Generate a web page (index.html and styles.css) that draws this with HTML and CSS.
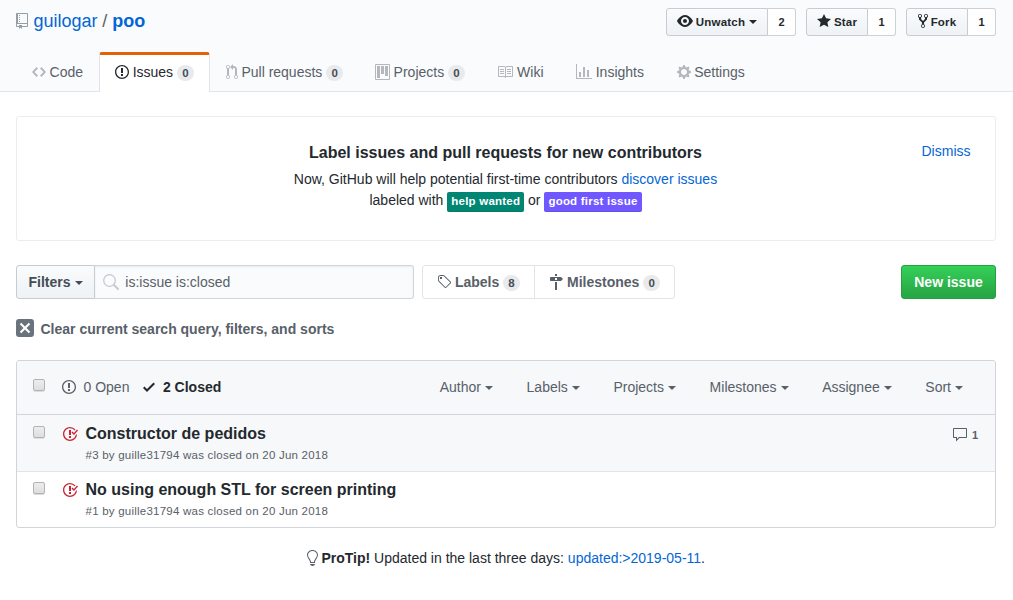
FILE: index.html
```html
<!DOCTYPE html>
<html lang="en">
<head>
<meta charset="utf-8">
<title>Issues · guilogar/poo</title>
<link rel="stylesheet" href="styles.css">
</head>
<body>
<header class="repohead">
  <div class="repohead-top">
    <h1 class="repo-title"><svg class="octicon repo-icon" width="12" height="16" viewBox="0 0 12 16"><path d="M4 9H3V8h1v1zm0-3H3v1h1V6zm0-2H3v1h1V4zm0-2H3v1h1V2zm8-1v12c0 .55-.45 1-1 1H6v2l-1.5-1.5L3 16v-2H1c-.55 0-1-.45-1-1V1c0-.55.45-1 1-1h10c.55 0 1 .45 1 1zm-1 10H1v2h2v-1h3v1h5v-2zm0-10H2v9h9V1z"/></svg><a href="#">guilogar</a><span class="divider">/</span><a href="#" class="strong">poo</a></h1>
    <ul class="actions">
      <li class="action watch"><button class="btn-sm"><svg class="octicon" width="16" height="16" viewBox="0 0 16 16"><path d="M8.06 2C3 2 0 8 0 8s3 6 8.06 6C13 14 16 8 16 8s-3-6-7.94-6zM8 12c-2.2 0-4-1.78-4-4 0-2.2 1.8-4 4-4 2.22 0 4 1.8 4 4 0 2.22-1.78 4-4 4zm2-4c0 1.11-.89 2-2 2-1.11 0-2-.89-2-2 0-1.11.89-2 2-2 1.11 0 2 .89 2 2z"/></svg> Unwatch<i class="caret"></i></button><a href="#" class="count">2</a></li>
      <li class="action"><button class="btn-sm"><svg class="octicon" width="14" height="16" viewBox="0 0 14 16"><path d="M14 6l-4.9-.64L7 1 4.9 5.36 0 6l3.6 3.26L2.67 14 7 11.67 11.33 14l-.93-4.74L14 6z"/></svg> Star</button><a href="#" class="count">1</a></li>
      <li class="action"><button class="btn-sm"><svg class="octicon" width="10" height="16" viewBox="0 0 10 16"><path d="M8 1a1.993 1.993 0 0 0-1 3.72V6L5 8 3 6V4.72A1.993 1.993 0 0 0 2 1a1.993 1.993 0 0 0-1 3.72V6.5l3 3v1.78A1.993 1.993 0 0 0 5 15a1.993 1.993 0 0 0 1-3.72V9.5l3-3V4.72A1.993 1.993 0 0 0 8 1zM2 4.2C1.34 4.2.8 3.65.8 3c0-.65.55-1.2 1.2-1.2.65 0 1.2.55 1.2 1.2 0 .65-.55 1.2-1.2 1.2zm3 10c-.66 0-1.2-.55-1.2-1.2 0-.65.55-1.2 1.2-1.2.65 0 1.2.55 1.2 1.2 0 .65-.55 1.2-1.2 1.2zm3-10c-.66 0-1.2-.55-1.2-1.2 0-.65.55-1.2 1.2-1.2.65 0 1.2.55 1.2 1.2 0 .65-.55 1.2-1.2 1.2z"/></svg> Fork</button><a href="#" class="count">1</a></li>
    </ul>
  </div>
  <nav class="reponav">
    <a href="#" class="tab"><svg class="octicon" width="14" height="16" viewBox="0 0 14 16"><path d="M9.5 3L8 4.5 11.5 8 8 11.5 9.5 13 14 8 9.5 3zm-5 0L0 8l4.5 5L6 11.5 2.5 8 6 4.5 4.5 3z"/></svg> Code</a>
    <a href="#" class="tab selected"><svg class="octicon" width="14" height="16" viewBox="0 0 14 16"><path d="M7 2.3c3.14 0 5.7 2.56 5.7 5.7s-2.56 5.7-5.7 5.7A5.71 5.71 0 0 1 1.3 8c0-3.14 2.56-5.7 5.7-5.7zM7 1C3.14 1 0 4.14 0 8s3.14 7 7 7 7-3.14 7-7-3.14-7-7-7zm1 3H6v5h2V4zm0 6H6v2h2v-2z"/></svg> Issues <span class="counter">0</span></a>
    <a href="#" class="tab"><svg class="octicon" width="12" height="16" viewBox="0 0 12 16"><path d="M11 11.28V5c-.03-.78-.34-1.47-.94-2.06C9.46 2.35 8.78 2.03 8 2H7V0L4 3l3 3V4h1c.27.02.48.11.69.31.21.2.3.42.31.69v6.28A1.993 1.993 0 0 0 10 15a1.993 1.993 0 0 0 1-3.72zm-1 2.92c-.66 0-1.2-.55-1.2-1.2 0-.65.55-1.2 1.2-1.2.65 0 1.2.55 1.2 1.2 0 .65-.55 1.2-1.2 1.2zM4 3c0-1.11-.89-2-2-2a1.993 1.993 0 0 0-1 3.72v6.56A1.993 1.993 0 0 0 2 15a1.993 1.993 0 0 0 1-3.72V4.72c.59-.34 1-.98 1-1.72zm-.8 10c0 .66-.55 1.2-1.2 1.2-.65 0-1.2-.55-1.2-1.2 0-.65.55-1.2 1.2-1.2.65 0 1.2.55 1.2 1.2zM2 4.2C1.34 4.2.8 3.65.8 3c0-.65.55-1.2 1.2-1.2.65 0 1.2.55 1.2 1.2 0 .65-.55 1.2-1.2 1.2z"/></svg> Pull requests <span class="counter">0</span></a>
    <a href="#" class="tab"><svg class="octicon" width="15" height="16" viewBox="0 0 15 16"><path fill-rule="evenodd" d="M10 12h3V2h-3v10zm-4-2h3V2H6v8zm-4 4h3V2H2v12zm-1 1h13V1H1v14zM14 0H1a1 1 0 0 0-1 1v14a1 1 0 0 0 1 1h13a1 1 0 0 0 1-1V1a1 1 0 0 0-1-1z"/></svg> Projects <span class="counter">0</span></a>
    <a href="#" class="tab plain"><svg class="octicon" width="16" height="16" viewBox="0 0 16 16"><path d="M3 5h4v1H3V5zm0 3h4V7H3v1zm0 2h4V9H3v1zm11-5h-4v1h4V5zm0 2h-4v1h4V7zm0 2h-4v1h4V9zm2-6v9c0 .55-.45 1-1 1H9.5l-1 1-1-1H2c-.55 0-1-.45-1-1V3c0-.55.45-1 1-1h5.5l1 1 1-1H15c.55 0 1 .45 1 1zm-8 .5L7.5 3H2v9h6V3.5zm7-.5H9.5l-.5.5V12h6V3z"/></svg> Wiki</a>
    <a href="#" class="tab plain"><svg class="octicon" width="16" height="16" viewBox="0 0 16 16"><path d="M16 14v1H0V0h1v14h15zM5 13H3V8h2v5zm4 0H7V3h2v10zm4 0h-2V6h2v7z"/></svg> Insights</a>
    <a href="#" class="tab plain"><svg class="octicon" width="14" height="16" viewBox="0 0 14 16"><path d="M14 8.77v-1.6l-1.94-.64-.45-1.09.88-1.84-1.13-1.13-1.81.91-1.09-.45-.69-1.92h-1.6l-.63 1.94-1.11.45-1.84-.88-1.13 1.13.91 1.81-.45 1.09L0 7.23v1.59l1.94.64.45 1.09-.88 1.84 1.13 1.13 1.81-.91 1.09.45.69 1.92h1.59l.63-1.94 1.11-.45 1.84.88 1.13-1.13-.92-1.81.47-1.09L14 8.75v.02zM7 11c-1.66 0-3-1.34-3-3s1.34-3 3-3 3 1.34 3 3-1.34 3-3 3z"/></svg> Settings</a>
  </nav>
</header>

<main class="content">
  <section class="banner">
    <a href="#" class="dismiss">Dismiss</a>
    <h2 class="banner-title">Label issues and pull requests for new contributors</h2>
    <p class="banner-text">Now, GitHub will help potential first-time contributors <a href="#">discover issues</a><br>labeled with <span class="label green">help wanted</span> or <span class="label purple">good first issue</span></p>
  </section>

  <div class="subnav">
    <button class="btn filters">Filters<i class="caret"></i></button>
    <div class="search"><svg class="search-icon" width="17" height="17" viewBox="0 0 17 17"><circle cx="6.5" cy="6.5" r="5.8"/><path d="M11 11l4 4"/></svg>is:issue is:closed</div>
    <div class="links">
      <a href="#" class="link"><svg class="octicon" width="14" height="16" viewBox="0 0 14 16"><path d="M7.73 1.73C7.26 1.26 6.62 1 5.96 1H3.5C2.13 1 1 2.13 1 3.5v2.47c0 .66.27 1.3.73 1.77l6.06 6.06c.39.39 1.02.39 1.41 0l4.59-4.59a.996.996 0 0 0 0-1.41L7.73 1.73zM2.38 7.09c-.31-.3-.47-.7-.47-1.13V3.5c0-.88.72-1.59 1.59-1.59h2.47c.42 0 .83.16 1.13.47l6.14 6.13-4.73 4.73-6.13-6.15zM3.01 3h2v2H3V3h.01z"/></svg> Labels <span class="counter">8</span></a>
      <a href="#" class="link"><svg class="octicon" width="14" height="16" viewBox="0 0 14 16"><path d="M8 2H6V0h2v2zm4 5H2c-.55 0-1-.45-1-1V4c0-.55.45-1 1-1h10l2 2-2 2zM8 4H6v2h2V4zM6 16h2V8H6v8z"/></svg> Milestones <span class="counter">0</span></a>
    </div>
    <button class="btn primary">New issue</button>
  </div>

  <a href="#" class="clear"><span class="clear-icon"><svg class="octicon" width="12" height="16" viewBox="0 0 12 16"><path d="M7.48 8l3.75 3.75-1.48 1.48L6 9.48l-3.75 3.75-1.48-1.48L4.52 8 .77 4.25l1.48-1.48L6 6.52l3.75-3.75 1.48 1.48L7.48 8z"/></svg></span>Clear current search query, filters, and sorts</a>

  <section class="box">
    <div class="box-header">
      <span class="checkbox"></span>
      <a href="#" class="state"><svg class="octicon" width="14" height="16" viewBox="0 0 14 16"><path d="M7 2.3c3.14 0 5.7 2.56 5.7 5.7s-2.56 5.7-5.7 5.7A5.71 5.71 0 0 1 1.3 8c0-3.14 2.56-5.7 5.7-5.7zM7 1C3.14 1 0 4.14 0 8s3.14 7 7 7 7-3.14 7-7-3.14-7-7-7zm1 3H6v5h2V4zm0 6H6v2h2v-2z"/></svg>0 Open</a>
      <a href="#" class="state current"><svg class="octicon" width="12" height="16" viewBox="0 0 12 16"><path d="M12 5l-8 8-4-4 1.5-1.5L4 10l6.5-6.5L12 5z"/></svg>2 Closed</a>
      <div class="menus">
        <span class="menu">Author<i class="caret"></i></span>
        <span class="menu">Labels<i class="caret"></i></span>
        <span class="menu">Projects<i class="caret"></i></span>
        <span class="menu">Milestones<i class="caret"></i></span>
        <span class="menu">Assignee<i class="caret"></i></span>
        <span class="menu">Sort<i class="caret"></i></span>
      </div>
    </div>
    <div class="row hovered">
      <span class="checkbox"></span>
      <svg class="octicon closed" width="16" height="16" viewBox="0 0 16 16"><path d="M7 10h2v2H7v-2zm2-6H7v5h2V4zm1.5 1.5l-1 1L12 9l4-4.5-1-1L12 7l-1.5-1.5zM8 13.7A5.71 5.71 0 0 1 2.3 8c0-3.14 2.56-5.7 5.7-5.7 1.83 0 3.45.88 4.5 2.2l.92-.92A6.947 6.947 0 0 0 8 1C4.14 1 1 4.14 1 8s3.14 7 7 7 7-3.14 7-7l-1.52 1.52c-.66 2.41-2.86 4.19-5.48 4.19v-.01z"/></svg>
      <div class="issue">
        <a href="#" class="issue-title">Constructor de pedidos</a>
        <div class="meta">#3 by guille31794 was closed on 20 Jun 2018</div>
      </div>
      <a href="#" class="comments"><svg class="octicon" width="16" height="16" viewBox="0 0 16 16"><path d="M14 1H2c-.55 0-1 .45-1 1v8c0 .55.45 1 1 1h2v3.5L7.5 11H14c.55 0 1-.45 1-1V2c0-.55-.45-1-1-1zm0 9H7l-2 2v-2H2V2h12v8z"/></svg>1</a>
    </div>
    <div class="row">
      <span class="checkbox"></span>
      <svg class="octicon closed" width="16" height="16" viewBox="0 0 16 16"><path d="M7 10h2v2H7v-2zm2-6H7v5h2V4zm1.5 1.5l-1 1L12 9l4-4.5-1-1L12 7l-1.5-1.5zM8 13.7A5.71 5.71 0 0 1 2.3 8c0-3.14 2.56-5.7 5.7-5.7 1.83 0 3.45.88 4.5 2.2l.92-.92A6.947 6.947 0 0 0 8 1C4.14 1 1 4.14 1 8s3.14 7 7 7 7-3.14 7-7l-1.52 1.52c-.66 2.41-2.86 4.19-5.48 4.19v-.01z"/></svg>
      <div class="issue">
        <a href="#" class="issue-title">No using enough STL for screen printing</a>
        <div class="meta">#1 by guille31794 was closed on 20 Jun 2018</div>
      </div>
    </div>
  </section>

  <p class="protip"><svg class="octicon" width="12" height="16" viewBox="0 0 12 16"><path d="M6.5 0C3.48 0 1 2.19 1 5c0 .92.55 2.25 1 3 1.34 2.25 1.78 2.78 2 4v1h5v-1c.22-1.22.66-1.75 2-4 .45-.75 1-2.08 1-3 0-2.81-2.48-5-5.5-5zm3.64 7.48c-.25.44-.47.8-.67 1.11-.86 1.41-1.25 2.06-1.45 3.23-.02.05-.02.11-.02.17H5c0-.06 0-.13-.02-.17-.2-1.17-.59-1.83-1.45-3.23-.2-.31-.42-.67-.67-1.11C2.44 6.78 2 5.65 2 5c0-2.2 2.02-4 4.5-4 1.22 0 2.36.42 3.22 1.19C10.55 2.94 11 3.94 11 5c0 .66-.44 1.78-.86 2.48zM4 14h5c-.23 1.14-1.3 2-2.5 2s-2.27-.86-2.5-2z"/></svg> <strong>ProTip!</strong> Updated in the last three days: <a href="#">updated:&gt;2019-05-11</a>.</p>
</main>
</body>
</html>
```
FILE: styles.css
```css
* { box-sizing: border-box; }
body {
  margin: 0;
  font: 14px/21px "Liberation Sans", Arial, sans-serif;
  color: #24292e;
  background: #fff;
}
a { color: #0366d6; text-decoration: none; }
h1, h2, p, ul { margin: 0; padding: 0; }
button { font-family: inherit; margin: 0; }
.octicon { display: inline-block; fill: currentColor; vertical-align: text-bottom; flex: none; }
.caret {
  display: inline-block;
  border: 4px solid transparent;
  border-top-color: currentColor;
  border-bottom: 0;
  vertical-align: middle;
  margin-left: 4px;
}

.repohead { height: 92px; background: #fafbfc; border-bottom: 1px solid #e1e4e8; padding: 8px 17px 0 16px; }
.repohead-top { display: flex; justify-content: space-between; height: 44px; }
.repo-title { font-size: 18px; font-weight: 400; line-height: 27px; display: flex; align-items: flex-start; }
.repo-icon { color: #959da5; margin: 5px 5.5px 0 0; }
.repo-title .divider { color: #586069; margin: 0 4.8px; }
.strong { font-weight: 700; }
.actions { display: flex; gap: 10px; list-style: none; }
.action { display: flex; width: 90px; height: 28px; }
.watch { width: 130px; }
.btn-sm {
  display: flex;
  align-items: center;
  justify-content: center;
  gap: 3px;
  flex: 1;
  padding: 0;
  font-size: 11.5px;
  letter-spacing: 0.2px;
  font-weight: 700;
  line-height: 20px;
  color: #24292e;
  border: 1px solid #c8cbcf;
  border-radius: 3px 0 0 3px;
  background: linear-gradient(#fafbfc, #eff3f6 90%);
  white-space: nowrap;
}
.btn-sm .caret { margin: 0 0 0 1px; }
.btn-sm .octicon { margin-top: -2px; }
.count {
  flex: none;
  width: 28px;
  padding: 3px 0;
  text-align: center;
  font-size: 11px;
  font-weight: 700;
  line-height: 20px;
  color: #24292e;
  background: #fff;
  border: 1px solid #cfd2d5;
  border-left: 0;
  border-radius: 0 3px 3px 0;
}
.reponav { display: flex; height: 40px; }
.tab {
  padding: 7px 15px 8px;
  border: 1px solid transparent;
  border-top-width: 3px;
  border-bottom: 0;
  line-height: 21px;
  color: #586069;
  white-space: nowrap;
}
.tab .octicon { color: #b4b8bc; margin-right: -0.3px; }
.tab.plain { margin-left: 0.6px; }
.tab.selected { color: #24292e; background: #fff; border-color: #e36209 #e1e4e8 transparent; border-radius: 3px 3px 0 0; }
.tab.selected .octicon { color: #24292e; }
.counter {
  display: inline-block;
  min-width: 16.8px;
  padding: 2px 5px;
  font-size: 11.5px;
  font-weight: 700;
  line-height: 12px;
  text-align: center;
  color: #444d56;
  background: #e9eaec;
  border-radius: 20px;
}

.content { padding: 24px 17px 0 16px; }
.banner { display: grid; position: relative; height: 125px; padding-top: 24px; border: 1px solid #eaecef; border-radius: 3px; text-align: center; align-content: start; }
.banner-title { font-size: 16px; line-height: 24px; margin-bottom: 4px; }
.banner-title, .banner-text { padding-right: 1px; }
.dismiss { position: absolute; top: 24px; right: 24.5px; }
.label {
  display: inline-block;
  padding: 2px 4px 3px;
  font-size: 11.5px;
  letter-spacing: 0.22px;
  font-weight: 700;
  line-height: 15px;
  height: 20px;
  color: #fff;
  border-radius: 2px;
  box-shadow: inset 0 -1px 0 rgba(27,31,35,.12);
  vertical-align: top;
  margin-top: 2px;
}
.green { background: #008672; }
.purple { background: #7057ff; }

.subnav { display: flex; height: 34px; margin-top: 24px; }
.btn {
  padding: 0 12px;
  font-size: 14px;
  font-weight: 700;
  line-height: 20px;
  border: 1px solid #c8cbcf;
  border-radius: 3px;
  background: linear-gradient(#fafbfc, #eff3f6 90%);
}
.filters { width: 79px; padding: 0; color: #444d56; border-radius: 3px 0 0 3px; }
.search {
  display: flex;
  align-items: center;
  width: 319px;
  padding-left: 8px;
  border: 1px solid #d1d5da;
  border-left: 0;
  border-radius: 0 3px 3px 0;
  background: #fafbfc;
  box-shadow: inset 0 1px 2px rgba(27,31,35,.075);
  color: #586069;
}
.search-icon { fill: none; stroke: #c6cace; stroke-width: 1.3; margin-right: 5.3px; }
.search-icon path { stroke-width: 2; stroke-linecap: round; }
.links { display: flex; margin: 0 auto 0 8px; border: 1px solid #e1e4e8; border-radius: 3px; }
.link { padding: 6px 14.2px 6px 14px; line-height: 20px; font-weight: 700; color: #586069; white-space: nowrap; }
.link + .link { border-left: 1px solid #e1e4e8; }
.primary { color: #fff; border-color: #279f43; background: linear-gradient(#34d058, #28a745 90%); width: 95px; padding: 0; }

.clear { display: flex; align-items: center; width: max-content; margin-top: 18px; color: #586069; font-weight: 700; height: 24px; }
.clear-icon { display: flex; align-items: center; justify-content: center; width: 18px; height: 18px; margin: -2px 6.5px 0 0; border-radius: 3px; color: #fff; background: #6a737d; }

.box { margin-top: 19px; border: 1px solid #d1d5da; border-radius: 3px; }
.box-header { display: flex; align-items: center; height: 54px; padding: 0 32px 0 16px; background: #f6f8fa; border-bottom: 1px solid #d1d5da; border-radius: 3px 3px 0 0; }
.checkbox { flex: none; width: 12px; height: 12px; border: 1px solid #b2b3b4; border-radius: 2px; background: linear-gradient(#ededed, #dedede); box-shadow: 0 1px 0 #ddd; }
.box-header .checkbox { margin: -5px 17px 0 0; }
.state { display: flex; align-items: center; margin-right: 13.5px; color: #586069; }
.state .octicon { margin: -1px 7.5px 0 0; }
.state.current { color: #24292e; font-weight: 700; }
.state.current .octicon { margin-right: 8px; }
.menus { display: flex; gap: 33.6px; margin-left: auto; color: #586069; }
.row { display: flex; align-items: flex-start; height: 55px; padding: 0 17px 0 16px; }
.hovered { background: #f6f8fa; height: 57px; padding-top: 1px; border-bottom: 1px solid #e1e4e8; }
.row .checkbox { margin: 10px 17px 0 0; }
.closed { color: #cb2431; margin: 10px 7.5px 0 0; }
.issue { padding-top: 8px; }
.issue-title { display: block; font-size: 16px; line-height: 20px; font-weight: 700; color: #24292e; }
.meta { margin-top: 3px; font-size: 11.5px; letter-spacing: 0.23px; line-height: 16px; color: #586069; }
.comments { display: flex; align-items: center; gap: 4px; margin: 9px 0 0 auto; font-size: 11px; line-height: 20px; font-weight: 700; color: #586069; }
.protip { margin-top: 20px; text-align: center; }
.protip .octicon { color: #586069; margin-left: -1px; }
.protip strong { margin-left: -0.5px; }
```
